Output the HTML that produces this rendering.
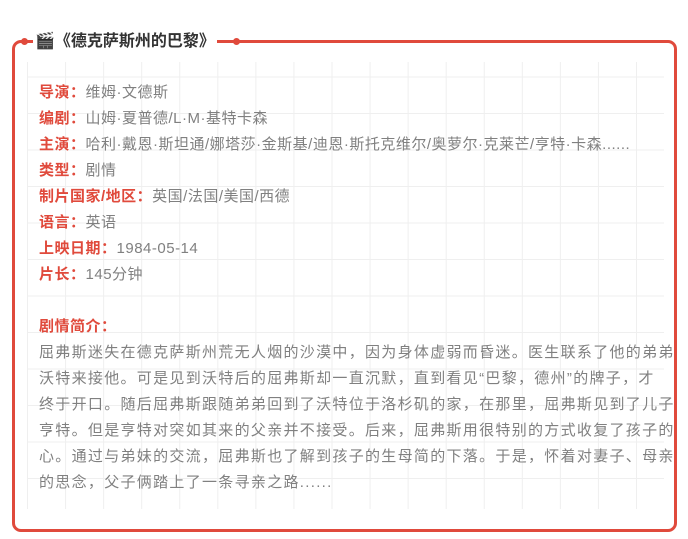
<!DOCTYPE html>
<html><head><meta charset="utf-8"><style>
body{margin:0;width:688px;height:539px;background:#fff;overflow:hidden;font-family:"Liberation Sans","Noto Sans CJK SC",sans-serif;}
.box{position:absolute;left:12px;top:40px;width:659px;height:486px;border:3px solid #e04a3c;border-radius:9px;}
.grid{position:absolute;left:27px;top:62px;width:637px;height:447px;
background-image:linear-gradient(to right,#efefef 1px,transparent 1px),linear-gradient(to bottom,#efefef 1px,transparent 1px);
background-size:38.07px 36.5px;background-position:0 14.5px;}
.title{position:absolute;left:33px;top:30px;height:24px;background:#fff;padding:0 2px;font-size:16px;font-weight:bold;color:#333;line-height:24px;}
.dot{position:absolute;width:7px;height:7px;border-radius:50%;background:#e04a3c;top:38px;}
.c{position:absolute;left:39px;top:80px;width:642px;font-size:15px;letter-spacing:0.5px;color:#808080;line-height:26px;}
.c b{color:#e04a3c;}
.p{width:660px;letter-spacing:1.3px;white-space:nowrap;}
</style></head><body>
<div class="box"></div>
<div class="grid"></div>
<div class="title">🎬《德克萨斯州的巴黎》</div>
<div class="dot" style="left:21px"></div>
<div class="dot" style="left:233px"></div>
<div class="c">
<div><b>导演：</b>维姆·文德斯</div>
<div><b>编剧：</b>山姆·夏普德/L·M·基特卡森</div>
<div style="white-space:nowrap"><b>主演：</b>哈利·戴恩·斯坦通/娜塔莎·金斯基/迪恩·斯托克维尔/奥萝尔·克莱芒/亨特·卡森......</div>
<div><b>类型：</b>剧情</div>
<div><b>制片国家/地区：</b>英国/法国/美国/西德</div>
<div><b>语言：</b>英语</div>
<div><b>上映日期：</b>1984-05-14</div>
<div><b>片长：</b>145分钟</div>
<div style="margin-top:26px"><b>剧情简介：</b></div>
<div class="p">屈弗斯迷失在德克萨斯州荒无人烟的沙漠中，因为身体虚弱而昏迷。医生联系了他的弟弟<br>沃特来接他。可是见到沃特后的屈弗斯却一直沉默，直到看见“巴黎，德州”的牌子，才<br>终于开口。随后屈弗斯跟随弟弟回到了沃特位于洛杉矶的家，在那里，屈弗斯见到了儿子<br>亨特。但是亨特对突如其来的父亲并不接受。后来，屈弗斯用很特别的方式收复了孩子的<br>心。通过与弟妹的交流，屈弗斯也了解到孩子的生母简的下落。于是，怀着对妻子、母亲<br>的思念，父子俩踏上了一条寻亲之路......</div>
</div>
</body></html>
